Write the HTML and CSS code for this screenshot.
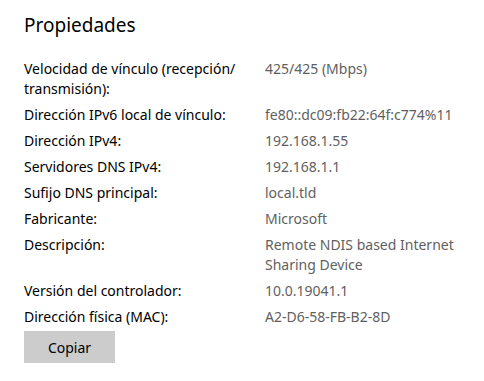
FILE: index.html
```html
<!DOCTYPE html>
<html lang="es">
<head>
<meta charset="utf-8">
<title>Propiedades</title>
<link rel="stylesheet" href="styles.css">
</head>
<body>
<main class="panel">
  <h1 class="title">Propiedades</h1>
  <dl class="props">
    <dt>Velocidad de vínculo (recepción/<wbr>transmisión):</dt>
    <dd>425/425 (Mbps)</dd>
    <dt>Dirección IPv6 local de vínculo:</dt>
    <dd>fe80::dc09:fb22:64f:c774%11</dd>
    <dt>Dirección IPv4:</dt>
    <dd>192.168.1.55</dd>
    <dt>Servidores DNS IPv4:</dt>
    <dd>192.168.1.1</dd>
    <dt>Sufijo DNS principal:</dt>
    <dd>local.tld</dd>
    <dt>Fabricante:</dt>
    <dd>Microsoft</dd>
    <dt>Descripción:</dt>
    <dd>Remote NDIS based Internet Sharing Device</dd>
    <dt>Versión del controlador:</dt>
    <dd>10.0.19041.1</dd>
    <dt>Dirección física (MAC):</dt>
    <dd>A2-D6-58-FB-B2-8D</dd>
  </dl>
  <button class="copy" type="button">Copiar</button>
</main>
</body>
</html>
```
FILE: styles.css
```css
html, body {
  margin: 0;
  padding: 0;
  background: #ffffff;
}
body {
  font-family: "Noto Sans", "Open Sans", "DejaVu Sans", sans-serif;
  color: #000000;
}
.panel {
  padding: 11px 24px 0 24px;
}
.title {
  margin: 0;
  font-size: 19px;
  font-weight: 400;
  line-height: 28px;
}
.props {
  margin: 20px 0 0 0;
  display: grid;
  grid-template-columns: 241px 200px;
  row-gap: 6px;
  font-size: 14px;
  line-height: 20px;
}
.props dt {
  margin: 0;
  padding-right: 8px;
  color: #000000;
}
.props dd {
  margin: 0;
  color: #5f5f5f;
}
.copy {
  display: block;
  margin-top: 4px;
  width: 91px;
  height: 32px;
  border: none;
  background: #cccccc;
  color: #000000;
  font-family: inherit;
  font-size: 14px;
  padding: 0;
}
```
